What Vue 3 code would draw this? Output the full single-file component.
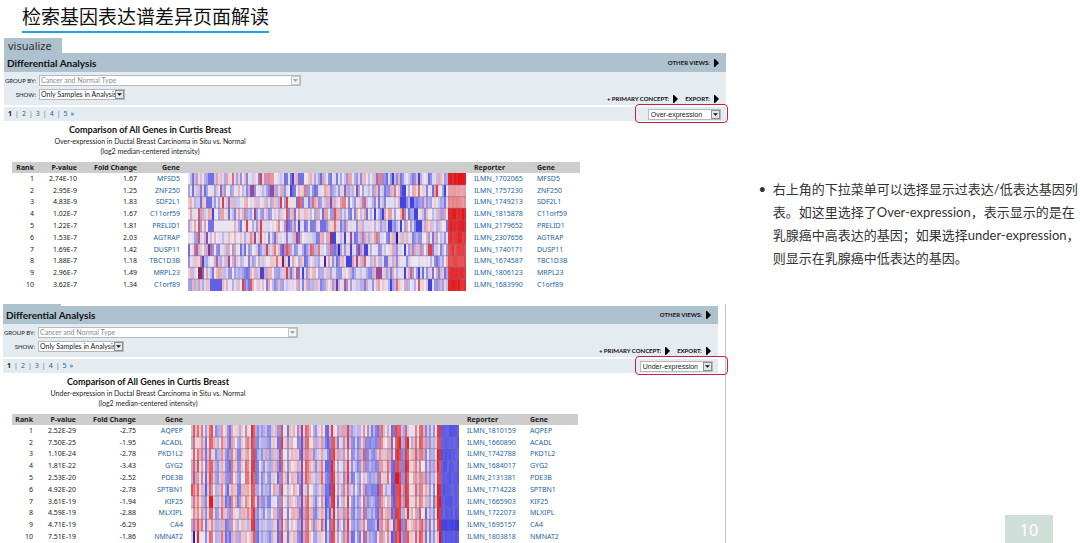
<script setup>
function makeRandom(seed) {
  let state = seed
  return () => {
    state = (state * 1664525 + 1013904223) % 4294967296
    return state / 4294967296
  }
}

function mix(a, b, t) {
  return Math.round(a + (b - a) * t)
}

// value runs from -1 (under-expressed, blue) to 1 (over-expressed, red)
function colour(value) {
  const t = Math.min(1, Math.abs(value))
  const end = value < 0 ? [52, 52, 226] : [224, 20, 24]
  return `rgb(${mix(240, end[0], t)},${mix(232, end[1], t)},${mix(240, end[2], t)})`
}

function toRects(rows) {
  return rows.flatMap((row, y) =>
    row.map((cell, x) => ({ x: x * 2, y: y * 10, fill: typeof cell === 'string' ? cell : colour(cell) }))
  )
}

const purple = '#9a4a98'

function buildOver() {
  const random = makeRandom(71)
  const tail = [1, 0.42, 0.5, 1, 0.96, 0.92, 0.84, 0.82, 0.9, 0.96]
  const rows = tail.map((strength) =>
    Array.from({ length: 139 }, (_, x) => {
      if (x >= 130) return strength - random() * 0.14
      const kind = random()
      if (kind < 0.36) return random() * 0.12 - 0.12
      if (kind < 0.66) return -0.18 - random() * 0.32
      if (kind < 0.76) return -0.5 - random() * 0.2
      if (kind < 0.98) return 0.1 + random() * 0.26
      return 0.45 + random() * 0.2
    })
  )
  const B = -0.92
  const M = -0.66
  const R = 0.8
  const accents = [
    [[10, 12, M], [22, 22, 0.6], [36, 36, R], [41, 42, 0.4], [52, 52, B], [55, 57, M], [95, 96, 0.5], [102, 102, B], [115, 115, B]],
    [[31, 32, purple], [41, 42, purple], [51, 51, B], [84, 84, purple], [107, 108, B], [124, 124, R], [128, 128, B]],
    [[9, 11, M], [17, 17, R], [46, 46, R], [49, 49, R], [50, 53, 0.05], [55, 55, 0.7], [71, 71, purple], [106, 108, B], [111, 112, B]],
    [[5, 5, 0.7], [12, 12, B], [20, 20, M], [33, 33, purple], [49, 49, 0.7], [73, 73, 0.7], [93, 93, B], [97, 97, B], [107, 107, R], [113, 114, B]],
    [[5, 5, 0.7], [10, 12, M], [13, 22, -0.03], [29, 29, R], [36, 36, R], [49, 49, purple], [55, 55, B], [61, 62, -0.6], [66, 68, M], [100, 101, B], [106, 106, B], [114, 116, B]],
    [[5, 5, 0.7], [9, 9, purple], [33, 33, purple], [36, 36, R], [54, 54, purple], [71, 71, '#b02845'], [72, 73, B], [78, 78, B], [81, 81, purple], [104, 104, '#2b188f']],
    [[4, 4, M], [10, 10, B], [39, 39, R], [47, 47, purple], [49, 49, 0.7], [75, 75, '#4a2397'], [81, 81, B], [85, 85, purple], [88, 89, B], [108, 108, B], [120, 121, R]],
    [[7, 7, B], [14, 14, M], [20, 20, purple], [47, 47, '#9c1746'], [50, 50, B], [68, 68, '#4a2397'], [79, 81, B], [84, 84, purple], [98, 99, M]],
    [[5, 6, '#9c284e'], [36, 37, B], [49, 49, R], [54, 54, 0.7], [57, 57, B], [94, 96, purple], [108, 108, B], [115, 115, B]],
    [[11, 16, -0.76], [27, 27, R], [31, 31, 0.7], [74, 74, B], [101, 101, B], [115, 115, 0.7], [120, 121, B]]
  ]
  accents.forEach((list, y) =>
    list.forEach(([from, to, value]) => {
      for (let x = from; x <= to; x++) rows[y][x] = value
    })
  )
  return toRects(rows)
}

function buildUnder() {
  const random = makeRandom(19)
  const profile = Array.from({ length: 134 }, () => (random() < 0.3 ? -0.18 : 0.06 + random() * 0.14))
  const bands = [
    [1, 1, 0.6], [3, 3, 0.55], [5, 5, 0.45], [7, 7, -0.6], [9, 10, 0.58], [12, 13, -0.4], [15, 15, 0.4], [17, 19, -0.55],
    [20, 20, 0.4], [23, 24, -0.45], [27, 28, 0.4], [30, 31, 0.7], [32, 33, -0.5], [35, 36, -0.35], [38, 39, -0.45],
    [43, 44, -0.55], [45, 45, 0.7], [48, 48, -0.55], [53, 54, -0.45], [55, 55, purple], [57, 58, 0.6], [61, 62, -0.4],
    [65, 65, 0.45], [67, 69, -0.65], [70, 71, 0.74], [73, 73, -0.45], [76, 76, -0.45], [78, 78, 0.66], [80, 81, -0.55],
    [83, 84, -0.45], [86, 86, 0.5], [87, 92, -0.42], [93, 93, -0.65], [94, 95, 0.5], [98, 98, 0.4], [100, 101, -0.62],
    [102, 104, 0.74], [105, 106, -0.45], [107, 108, 0.76], [112, 112, 0.5], [114, 115, 0.55], [117, 117, -0.55],
    [119, 119, -0.45], [121, 121, -0.45], [123, 124, 0.84], [125, 133, -0.78]
  ]
  bands.forEach(([from, to, value]) => {
    for (let x = from; x <= to; x++) profile[x] = value
  })
  const rows = Array.from({ length: 10 }, (_, y) =>
    profile.map((base, x) => {
      if (typeof base === 'string') return base
      if (x >= 125) return (y === 8 ? -0.92 : base) + random() * 0.12 - 0.06
      if (random() < 0.1) return random() * 0.7 - 0.35
      return base + random() * 0.34 - 0.17
    })
  )
  rows[6][9] = 0.95
  rows[6][10] = 0.95
  rows[4][102] = 0.98
  rows[4][103] = 0.98
  rows[9][1] = '#421d8d'
  rows[9][3] = 0.9
  rows[5][0] = 0.7
  return toRects(rows)
}

function toRows(list) {
  return list.map(([p, fold, gene, reporter], i) => ({ rank: i + 1, p, fold, gene, reporter }))
}

const panels = [
  {
    id: 'over',
    tab: 'visualize',
    expression: 'Over-expression',
    subtitle: 'Over-expression in Ductal Breast Carcinoma in Situ vs. Normal',
    mapWidth: 278,
    cells: buildOver(),
    rows: toRows([
      ['2.74E-10', '1.67', 'MFSD5', 'ILMN_1702065'],
      ['2.95E-9', '1.25', 'ZNF250', 'ILMN_1757230'],
      ['4.83E-9', '1.83', 'SDF2L1', 'ILMN_1749213'],
      ['1.02E-7', '1.67', 'C11orf59', 'ILMN_1815878'],
      ['1.22E-7', '1.81', 'PRELID1', 'ILMN_2179652'],
      ['1.53E-7', '2.03', 'AGTRAP', 'ILMN_2307656'],
      ['1.69E-7', '1.42', 'DUSP11', 'ILMN_1740171'],
      ['1.88E-7', '1.18', 'TBC1D3B', 'ILMN_1674587'],
      ['2.96E-7', '1.49', 'MRPL23', 'ILMN_1806123'],
      ['3.62E-7', '1.34', 'C1orf89', 'ILMN_1683990']
    ])
  },
  {
    id: 'under',
    tab: '',
    expression: 'Under-expression',
    subtitle: 'Under-expression in Ductal Breast Carcinoma in Situ vs. Normal',
    mapWidth: 268,
    cells: buildUnder(),
    rows: toRows([
      ['2.52E-29', '-2.75', 'AQPEP', 'ILMN_1810159'],
      ['7.50E-25', '-1.95', 'ACADL', 'ILMN_1660890'],
      ['1.10E-24', '-2.78', 'PKD1L2', 'ILMN_1742788'],
      ['1.81E-22', '-3.43', 'GYG2', 'ILMN_1684017'],
      ['2.53E-20', '-2.52', 'PDE3B', 'ILMN_2131381'],
      ['4.92E-20', '-2.78', 'SPTBN1', 'ILMN_1714228'],
      ['3.61E-19', '-1.94', 'KIF25', 'ILMN_1665903'],
      ['4.59E-19', '-2.88', 'MLXIPL', 'ILMN_1722073'],
      ['4.71E-19', '-6.29', 'CA4', 'ILMN_1695157'],
      ['7.51E-19', '-1.86', 'NMNAT2', 'ILMN_1803818']
    ])
  }
]
</script>

<template>
  <main class="slide">
    <div class="left">
      <h1 class="title">检索基因表达谱差异页面解读</h1>

      <section v-for="panel in panels" :key="panel.id" class="panel" :class="panel.id">
        <div class="tab">{{ panel.tab }}</div>
        <header class="bar">
          <h2>Differential Analysis</h2>
          <button class="action" type="button">
            OTHER VIEWS:
            <svg viewBox="0 0 5 8"><path d="M0 0H1L5 4L1 8H0Z" /></svg>
          </button>
        </header>

        <div class="filters">
          <div class="fields">
            <label :for="panel.id + '-group'">GROUP BY:</label>
            <span class="select wide disabled">
              <select :id="panel.id + '-group'" disabled><option>Cancer and Normal Type</option></select>
              <span class="drop"><svg viewBox="0 0 6 3"><path d="M0 0H6L3 3Z" /></svg></span>
            </span>
            <label :for="panel.id + '-show'">SHOW:</label>
            <span class="select narrow">
              <select :id="panel.id + '-show'"><option>Only Samples in Analysis</option></select>
              <span class="drop"><svg viewBox="0 0 6 3"><path d="M0 0H6L3 3Z" /></svg></span>
            </span>
          </div>
          <div class="actions">
            <button class="action" type="button">
              + PRIMARY CONCEPT:
              <svg viewBox="0 0 5 8"><path d="M0 0H1L5 4L1 8H0Z" /></svg>
            </button>
            <button class="action" type="button">
              EXPORT:
              <svg viewBox="0 0 5 8"><path d="M0 0H1L5 4L1 8H0Z" /></svg>
            </button>
          </div>
        </div>

        <div class="pager">
          <nav>
            <b>1</b>
            <template v-for="n in [2, 3, 4, 5]" :key="n"><i>|</i><a href="#">{{ n }}</a></template>
            <a href="#">»</a>
          </nav>
          <span class="select expression">
            <select :aria-label="panel.expression"><option>{{ panel.expression }}</option></select>
            <span class="drop"><svg viewBox="0 0 6 3"><path d="M0 0H6L3 3Z" /></svg></span>
          </span>
          <span class="highlight"></span>
        </div>

        <div class="caption">
          <h3>Comparison of All Genes in Curtis Breast</h3>
          <p>{{ panel.subtitle }}</p>
          <p>(log2 median-centered intensity)</p>
        </div>

        <table>
          <colgroup>
            <col class="c-rank" /><col class="c-p" /><col class="c-fold" /><col class="c-gene" />
            <col class="c-map" /><col class="c-reporter" /><col />
          </colgroup>
          <thead>
            <tr>
              <th class="num">Rank</th>
              <th class="num">P-value</th>
              <th class="num">Fold Change</th>
              <th class="num gene">Gene</th>
              <th></th>
              <th class="reporter">Reporter</th>
              <th>Gene</th>
            </tr>
          </thead>
          <tbody>
            <tr v-for="(row, i) in panel.rows" :key="row.rank">
              <td class="num">{{ row.rank }}</td>
              <td class="num">{{ row.p }}</td>
              <td class="num">{{ row.fold }}</td>
              <td class="num gene"><a href="#">{{ row.gene }}</a></td>
              <td v-if="i === 0" class="map" :rowspan="panel.rows.length">
                <svg :viewBox="`0 0 ${panel.mapWidth} 100`" preserveAspectRatio="none">
                  <rect v-for="(c, k) in panel.cells" :key="k" :x="c.x" :y="c.y" width="2" height="10" :fill="c.fill" />
                  <path v-for="n in 9" :key="'l' + n" :d="`M0 ${n * 10}H${panel.mapWidth}`" class="rule" />
                </svg>
              </td>
              <td class="reporter"><a href="#">{{ row.reporter }}</a></td>
              <td><a href="#">{{ row.gene }}</a></td>
            </tr>
          </tbody>
        </table>
      </section>
    </div>

    <aside class="notes">
      <ul>
        <li>
          右上角的下拉菜单可以选择显示过表达/低表达基因列<br />表。如这里选择了Over-expression，表示显示的是在<br />乳腺癌中高表达的基因；如果选择under-expression，<br />则显示在乳腺癌中低表达的基因。
        </li>
      </ul>
    </aside>
    <div class="page-number">10</div>
  </main>
</template>

<style>
body {
  background: #fff;
  overflow: hidden;
}
</style>

<style scoped>
.slide {
  position: relative;
  display: flex;
  height: 100vh;
  overflow: hidden;
  font-family: "Noto Sans", "Noto Sans CJK SC", sans-serif;
  color: #222;
}
.left {
  flex: 0 0 auto;
  width: 67.2%;
  box-sizing: border-box;
}
h1, h2, h3, p, ul {
  margin: 0;
  padding: 0;
}
.title {
  width: max-content;
  height: 31px;
  margin-left: 22px;
  border-bottom: 2px solid #1ba6e2;
  font: 400 19px/31px "Noto Sans CJK SC", sans-serif;
  color: #111;
}
.panel {
  font-size: 7px;
  line-height: 10px;
}
.over {
  margin: 5px 0 0 4px;
}
.under {
  margin: 13px 0 0 3px;
  padding-right: 7px;
  border-right: 1px solid #c4c4c4;
}
.tab {
  box-sizing: border-box;
  width: 58px;
  height: 15px;
  padding-left: 4px;
  background: #adc1ce;
  font-size: 11px;
  line-height: 15px;
  color: #333;
}
.under .tab {
  height: 2px;
}
.bar {
  display: flex;
  align-items: center;
  justify-content: space-between;
  height: 19px;
  padding: 0 7px 0 3px;
  background: #adc1ce;
}
.under .bar {
  height: 18px;
}
.bar h2 {
  font: 700 10px/18px Lato, sans-serif;
  color: #111;
}
.action {
  display: flex;
  align-items: center;
  gap: 4px;
  padding: 0;
  border: 0;
  background: none;
  font: 700 6px/8px Lato, sans-serif;
  color: #111;
}
.action svg {
  width: 5px;
  height: 8px;
}
.filters {
  display: flex;
  justify-content: space-between;
  height: 33px;
  background: #e4ebf1;
}
.fields {
  display: grid;
  grid-template-columns: 32px auto;
  grid-auto-rows: 11px;
  gap: 3px;
  padding-top: 3px;
  align-items: center;
}
.fields label {
  justify-self: end;
  font: 400 6px/10px Lato, sans-serif;
  white-space: nowrap;
}
.select {
  display: flex;
  box-sizing: border-box;
  height: 11px;
  border: 1px solid #b5b9bd;
  background: #fff;
}
.select select {
  flex: 1;
  min-width: 0;
  padding: 0 0 0 1px;
  border: 0;
  background: none;
  appearance: none;
  font: 7px/9px Lato, sans-serif;
  color: #222;
  opacity: 1;
}
.select.disabled select {
  color: #8c8c8c;
}
.drop {
  display: flex;
  align-items: center;
  justify-content: center;
  box-sizing: border-box;
  width: 9px;
  border: 1px solid #8d9196;
  background: #e6e6e6;
}
.drop svg {
  width: 5px;
  height: 3px;
  fill: #111;
}
.disabled .drop {
  border-color: #c4c8cc;
  background: #f4f4f4;
}
.disabled .drop svg {
  fill: #999;
}
.wide {
  width: 262px;
}
.narrow {
  width: 86px;
}
.under .wide {
  width: 260px;
}
.actions {
  display: flex;
  align-items: flex-end;
  gap: 7px;
  padding: 0 7px 2px 0;
}
.pager {
  position: relative;
  display: flex;
  align-items: center;
  justify-content: space-between;
  height: 14px;
  margin-top: 2px;
  padding: 0 5px 0 4px;
  background: #e4ebf1;
}
.pager nav {
  display: flex;
  gap: 3px;
}
.pager i {
  font-style: normal;
  color: #777;
}
a {
  color: #24639f;
  text-decoration: none;
}
.expression {
  width: 73px;
}
.select.expression select {
  padding-left: 2px;
  font-family: "Liberation Sans", sans-serif;
}
.highlight {
  position: absolute;
  right: -2px;
  top: -3px;
  box-sizing: border-box;
  width: 93px;
  height: 19px;
  border: 1px solid #c8203f;
  border-radius: 4px;
  pointer-events: none;
}
.under .highlight {
  right: -10px;
}
.caption {
  width: 292px;
  padding-top: 3px;
  text-align: center;
}
.under .caption {
  width: 290px;
}
.caption h3 {
  font: 700 9px/12px Lato, sans-serif;
  color: #111;
}
.caption p {
  font: 400 7px/10px Lato, sans-serif;
}
table {
  width: 568px;
  margin: 6px 0 0 8px;
  border-collapse: collapse;
  table-layout: fixed;
}
.under table {
  width: 566px;
  margin-left: 9px;
}
.c-rank { width: 22px; }
.c-p { width: 43px; }
.c-fold { width: 60px; }
.c-gene { width: 51px; }
.c-map { width: 278px; }
.c-reporter { width: 71px; }
.under .c-rank { width: 21px; }
.under .c-gene { width: 55px; }
.under .c-map { width: 268px; }
th, td {
  padding: 0;
  text-align: left;
  white-space: nowrap;
}
th {
  height: 11px;
  background: #cdcdcd;
  line-height: 11px;
}
td {
  line-height: 10px;
}
.num {
  text-align: right;
}
.num.gene {
  padding-right: 8px;
}
.reporter {
  padding-left: 8px;
}
.map {
  vertical-align: top;
}
.map svg {
  display: block;
  width: 100%;
  height: 118px;
}
.map rect {
  shape-rendering: crispEdges;
}
.rule {
  stroke: #77727e;
  stroke-opacity: 0.45;
  stroke-width: 1;
}
.notes {
  flex: 1;
  padding-top: 178px;
}
.notes ul {
  padding-left: 47px;
  list-style: "•  ";
}
.notes li {
  font: 13px/23px Lato, "Noto Sans CJK SC", sans-serif;
  white-space: nowrap;
  color: #333;
}
.page-number {
  position: absolute;
  right: 27px;
  bottom: 0;
  width: 48px;
  height: 28px;
  background: #cfded6;
  font-size: 16px;
  line-height: 30px;
  text-align: center;
  color: #fff;
}
</style>
